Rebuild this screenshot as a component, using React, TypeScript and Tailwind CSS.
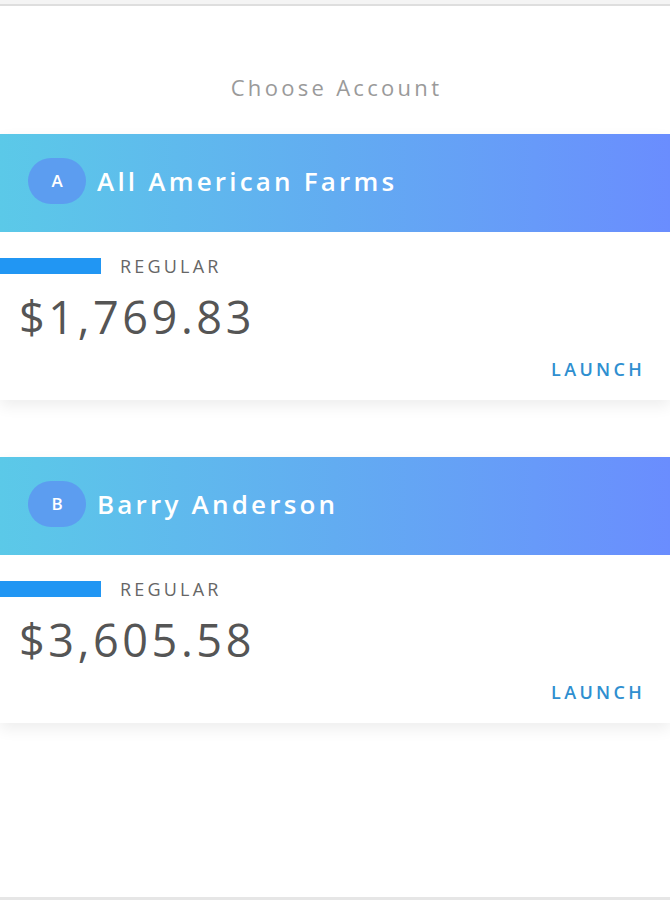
import React from "react";

type Account = {
  letter: string;
  name: string;
  kind: string;
  balance: string;
};

const accounts: Account[] = [
  { letter: "A", name: "All American Farms", kind: "REGULAR", balance: "$1,769.83" },
  { letter: "B", name: "Barry Anderson", kind: "REGULAR", balance: "$3,605.58" },
];

function AccountCard({ acct }: { acct: Account }) {
  return (
    <div className="bg-white shadow-[0_6px_14px_rgba(0,0,0,0.07)]">
      <div className="h-[98px] flex items-center pb-[4px] bg-gradient-to-r from-[#5bc9e8] via-[#62acf1] to-[#6a8dfe]">
        <div className="ml-[28px] w-[58px] h-[46px] rounded-full bg-[#5c9df0] flex items-center justify-center text-white text-[17px] font-semibold">
          {acct.letter}
        </div>
        <div className="ml-[11px] text-white text-[26px] font-semibold tracking-[3.2px]">
          {acct.name}
        </div>
      </div>
      <div className="h-[168px] flex flex-col">
        <div className="mt-[25px] flex items-center">
          <div className="w-[101px] h-[16px] bg-[#2196f3]" />
          <div className="ml-[19px] text-[18px] leading-none text-[#666] tracking-[3.2px] font-medium">
            {acct.kind}
          </div>
        </div>
        <div className="mt-[16px] ml-[19px] text-[45px] leading-[52px] text-[#555] font-medium tracking-[3.6px]">
          {acct.balance}
        </div>
        <div className="mt-[17px] mr-[25px] self-end text-[18px] leading-none font-semibold text-[#2f8fd0] tracking-[3.3px]">
          LAUNCH
        </div>
      </div>
    </div>
  );
}

export default function App() {
  return (
    <div className="h-[900px] w-[670px] bg-white flex flex-col overflow-hidden" style={{ fontFamily: '"Open Sans", "Liberation Sans", sans-serif' }}>
      <div className="h-[6px] bg-[#f4f4f4] border-b-2 border-[#dedede]" />
      <div className="h-[128px] flex items-center justify-center pt-[34px]">
        <div className="text-[22px] text-[#9a9a9a] tracking-[3.3px] pl-[3px]">Choose Account</div>
      </div>
      <AccountCard acct={accounts[0]} />
      <div className="h-[57px]" />
      <AccountCard acct={accounts[1]} />
      <div className="flex-1" />
      <div className="h-[3px] bg-[#e6e6e6]" />
    </div>
  );
}
